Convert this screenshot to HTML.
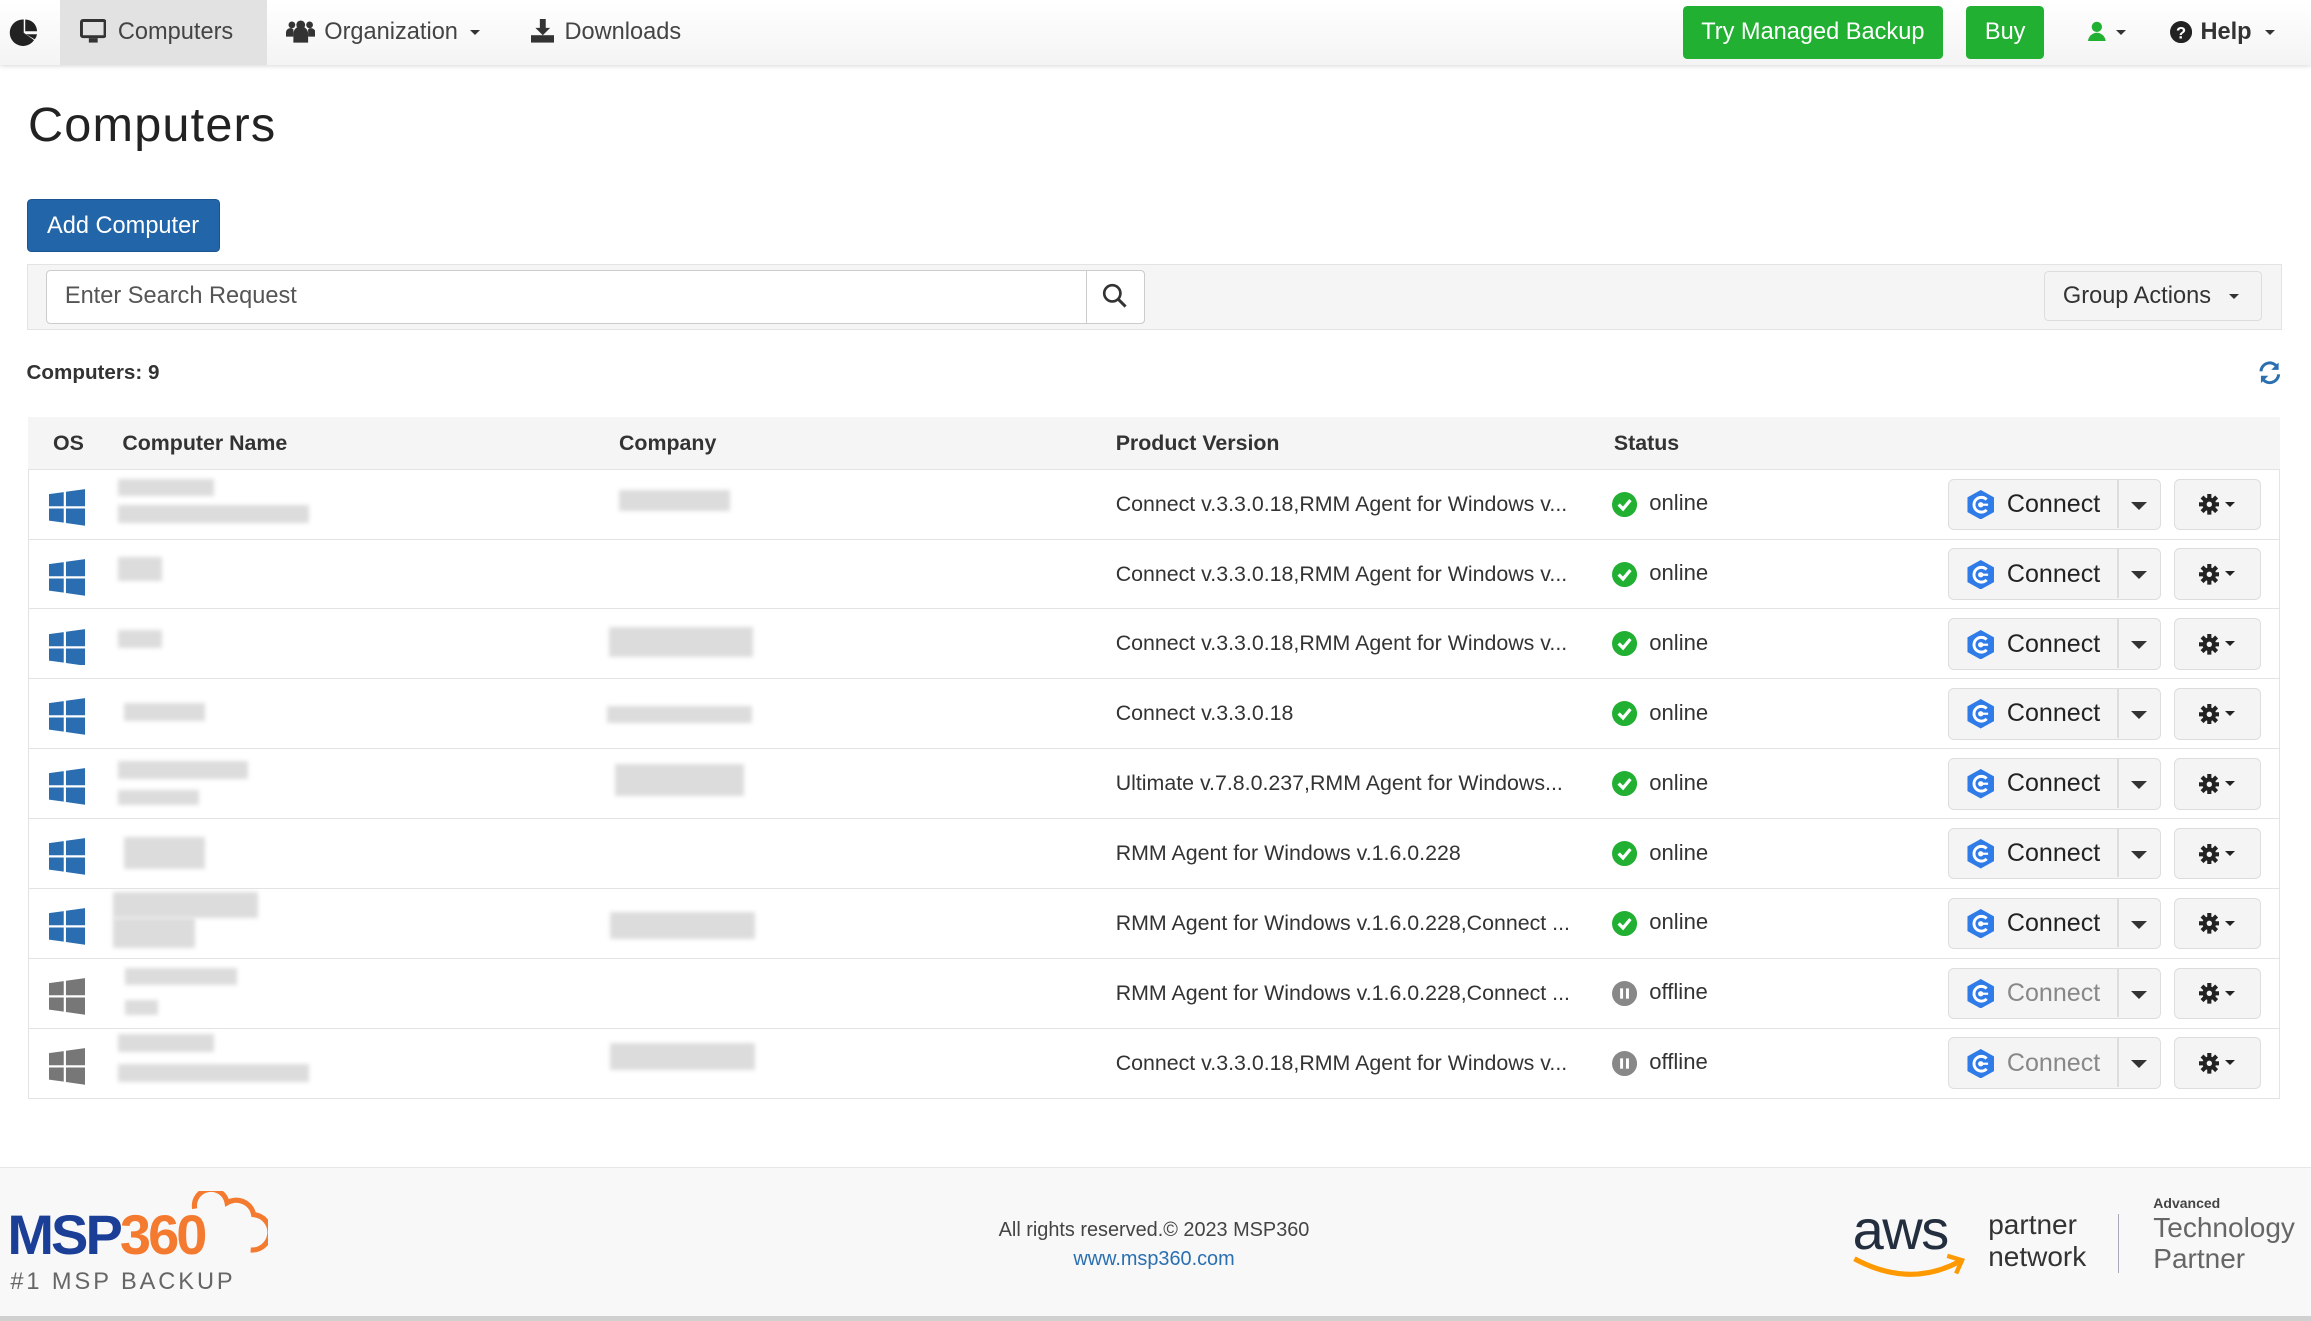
<!DOCTYPE html>
<html><head><meta charset="utf-8"><style>
html{zoom:1.47385}
*{box-sizing:border-box}
body{margin:0;width:1568px;height:896px;overflow:hidden;font-family:"Liberation Sans",sans-serif;color:#333;background:#fff;position:relative;font-size:14px}
.abs{position:absolute}
.nav{left:0;top:0;width:1568px;height:44px;background:linear-gradient(#fff,#f4f4f4);box-shadow:0 1px 3px rgba(0,0,0,.15)}
.nav .it{position:absolute;top:0;height:44px;line-height:43px;font-size:16px;color:#444}
.btn-g{background:#22b033;color:#fff;border-radius:3px;font-size:16px;text-align:center;line-height:35px;height:36px;top:4px}
.blur{background:#d6d6d6;filter:blur(1.5px);opacity:.85}
.row{left:19px;width:1528px;height:48px;border-top:1px solid #e3e3e3}
.cell{position:absolute;top:0;line-height:47px;font-size:14.5px;color:#333}
.cb{position:absolute;left:1303px;top:6px;width:144px;height:35px;border:1px solid #ddd;border-radius:4px;background:#f4f4f4}
.gb{position:absolute;left:1456px;top:6px;width:59px;height:35px;border:1px solid #ddd;border-radius:4px;background:#f4f4f4}
.car{display:inline-block;width:0;height:0;border-left:4px solid transparent;border-right:4px solid transparent;border-top:4px solid #333;vertical-align:middle}
</style></head><body>
<div class="abs nav">
 <svg class="abs" style="left:6px;top:12px" width="20" height="20" viewBox="0 0 20 20"><path d="M9 1A9 9 0 1 0 17 15L10 10V1Z" fill="#222"/><path d="M11 1A8 8 0 0 1 19 9H11Z" fill="#222"/><path d="M11.5 11H19A8 8 0 0 1 17.5 14.5Z" fill="#222"/></svg>
 <div class="it" style="left:41px;width:140px;background:#e2e2e2"></div>
 <svg class="abs" style="left:54px;top:13px" width="18" height="17" viewBox="0 0 18 17"><rect x="1" y="1" width="16" height="11" rx="1" fill="none" stroke="#333" stroke-width="2"/><rect x="6" y="13" width="6" height="3" fill="#333"/></svg>
 <div class="it" style="left:80px">Computers</div>
 <svg class="abs" style="left:194px;top:13px" width="20" height="16" viewBox="0 0 20 16"><circle cx="10" cy="4" r="3" fill="#333"/><circle cx="4" cy="4" r="2.3" fill="#333"/><circle cx="16" cy="4" r="2.3" fill="#333"/><path d="M5 16V10a5 5 0 0 1 10 0v6Z" fill="#333"/><path d="M0 12V9a3 3 0 0 1 5-2v5Z" fill="#333"/><path d="M20 12V9a3 3 0 0 0-5-2v5Z" fill="#333"/></svg>
 <div class="it" style="left:220px">Organization <span class="car" style="margin-left:4px"></span></div>
 <svg class="abs" style="left:360px;top:13px" width="16" height="16" viewBox="0 0 16 16"><path d="M6 0h4v6h3l-5 5-5-5h3z" fill="#333"/><rect x="0" y="11" width="16" height="5" fill="#333"/></svg>
 <div class="it" style="left:383px">Downloads</div>
 <div class="abs btn-g" style="left:1142px;width:176px">Try Managed Backup</div>
 <div class="abs btn-g" style="left:1334px;width:53px">Buy</div>
 <svg class="abs" style="left:1417px;top:14px" width="12" height="14" viewBox="0 0 12 14"><circle cx="6" cy="4" r="3.5" fill="#22b033"/><path d="M0 14a6 6 0 0 1 12 0Z" fill="#22b033"/></svg>
 <div class="it" style="left:1436px"><span class="car"></span></div>
 <svg class="abs" style="left:1472px;top:14px" width="15" height="15" viewBox="0 0 16 16"><circle cx="8" cy="8" r="8" fill="#222"/><text x="8" y="12.5" font-size="12" font-weight="bold" fill="#fff" text-anchor="middle" font-family="Liberation Sans">?</text></svg>
 <div class="it" style="left:1493px;font-weight:bold;color:#333">Help <span class="car" style="margin-left:5px"></span></div>
</div>
<div class="abs" style="left:19px;top:66px;font-size:33px;color:#222;letter-spacing:0.8px">Computers</div>
<div class="abs" style="left:18px;top:135px;width:131px;height:36px;background:#2265a9;border:1px solid #1b5590;border-radius:3px;color:#fff;font-size:16px;line-height:34px;text-align:center">Add Computer</div>
<div class="abs" style="left:18px;top:179px;width:1530px;height:45px;background:#f5f5f5;border:1px solid #e3e3e3"></div>
<div class="abs" style="left:31px;top:183px;width:746px;height:37px;background:#fff;border:1px solid #ccc;border-radius:3px"></div>
<div class="abs" style="left:737px;top:183px;width:40px;height:37px;border:1px solid #ccc;border-radius:0 3px 3px 0;background:#fff"></div>
<div class="abs" style="left:44px;top:191px;font-size:16px;color:#555">Enter Search Request</div>
<svg class="abs" style="left:748px;top:192px" width="18" height="18" viewBox="0 0 18 18"><circle cx="7" cy="7" r="5.5" fill="none" stroke="#333" stroke-width="1.8"/><path d="M11 11l5 5" stroke="#333" stroke-width="2"/></svg>
<div class="abs" style="left:1387px;top:184px;width:148px;height:34px;border:1px solid #ddd;border-radius:3px;background:#f4f4f4;font-size:16px;line-height:32px;padding-left:12px;color:#333">Group Actions <span class="car" style="margin-left:8px"></span></div>
<div class="abs" style="left:18px;top:245px;font-size:14px;font-weight:bold;color:#333">Computers: 9</div>
<svg class="abs" style="left:1532px;top:245px" width="16" height="16" viewBox="0 0 16 16"><path d="M2 7A6 6 0 0 1 13 4" fill="none" stroke="#2a6fb0" stroke-width="2"/><path d="M14 1v5h-5z" fill="#2a6fb0"/><path d="M14 9A6 6 0 0 1 3 12" fill="none" stroke="#2a6fb0" stroke-width="2"/><path d="M2 15v-5h5z" fill="#2a6fb0"/></svg>
<div class="abs" style="left:19px;top:283px;width:1528px;height:463px;border:1px solid #e3e3e3"></div>
<div class="abs" style="left:19px;top:283px;width:1528px;height:35px;background:#f5f5f5;font-weight:bold;font-size:14.5px;line-height:36px">
 <span class="abs" style="left:17px">OS</span><span class="abs" style="left:64px">Computer Name</span><span class="abs" style="left:401px">Company</span><span class="abs" style="left:738px">Product Version</span><span class="abs" style="left:1076px">Status</span>
</div>
<div id="rows"></div>
<div class="abs" style="left:0;top:792px;width:1568px;height:101px;background:#f8f8f8;border-top:1px solid #e6e6e6"></div>
<div class="abs" style="left:0;top:893px;width:1568px;height:3px;background:#d0d0d0"></div>
<div class="abs" style="left:5px;top:818px;font-size:38px;font-weight:bold;letter-spacing:-2px;line-height:40px"><span style="color:#1b3f97">MSP</span><span style="color:#f47a30">360</span></div>
<svg class="abs" style="left:120px;top:808px" width="62" height="50" viewBox="0 0 62 50"><path d="M12 12a10 10 0 0 1 22-4a12 12 0 0 1 18 8a12 12 0 0 1 -2 24" fill="none" stroke="#f47a30" stroke-width="3.5"/></svg>
<div class="abs" style="left:7px;top:860px;font-size:16px;letter-spacing:2px;color:#666">#1 MSP BACKUP</div>
<div class="abs" style="left:600px;top:825px;width:366px;text-align:center;font-size:13.5px;color:#444;line-height:20px">All rights reserved.© 2023 MSP360<br><span style="color:#2a6fb0">www.msp360.com</span></div>
<div class="abs" style="left:1257px;top:812px;font-size:38px;color:#232f3e;letter-spacing:-1px">aws</div>
<svg class="abs" style="left:1255px;top:846px" width="80" height="24" viewBox="0 0 80 24"><path d="M3 8Q40 28 74 10" fill="none" stroke="#f90" stroke-width="3.5"/><path d="M66 6l10 3-4 9" fill="none" stroke="#f90" stroke-width="3"/></svg>
<div class="abs" style="left:1349px;top:820px;font-size:19px;color:#333;line-height:22px">partner<br>network</div>
<div class="abs" style="left:1437px;top:824px;width:1px;height:40px;background:#aab"></div>
<div class="abs" style="left:1461px;top:811px;font-size:9.5px;font-weight:bold;color:#444">Advanced</div>
<div class="abs" style="left:1461px;top:823px;font-size:19px;color:#666;line-height:21px">Technology<br>Partner</div>
<script>
var d=[["Connect v.3.3.0.18,RMM Agent for Windows v...",1,[[0,6,65,12],[0,24,130,12]],[[2,14,75,14]]],
["Connect v.3.3.0.18,RMM Agent for Windows v...",1,[[0,12,30,16]],[]],
["Connect v.3.3.0.18,RMM Agent for Windows v...",1,[[0,14,30,12]],[[-5,12,98,20]]],
["Connect v.3.3.0.18",1,[[4,16,55,12]],[[-6,18,98,12]]],
["Ultimate v.7.8.0.237,RMM Agent for Windows...",1,[[0,8,88,12],[0,28,55,10]],[[-1,10,88,22]]],
["RMM Agent for Windows v.1.6.0.228",1,[[4,12,55,22]],[]],
["RMM Agent for Windows v.1.6.0.228,Connect ...",1,[[-3,2,98,18],[-3,20,55,20]],[[-4,16,98,18]]],
["RMM Agent for Windows v.1.6.0.228,Connect ...",0,[[5,6,76,12],[5,28,22,10]],[]],
["Connect v.3.3.0.18,RMM Agent for Windows v...",0,[[0,4,65,12],[0,24,130,12]],[[-4,10,98,18]]]];
var h="";
d.forEach(function(r,i){var t=318+i*47.4;var on=r[1];var wc=on?"#2a6db0":"#777";
h+='<div class="abs row" style="top:'+t+'px">';
h+='<svg class="abs" style="left:14px;top:13px" width="25" height="25" viewBox="0 0 25 25"><path d="M0 3.5l10-1.4v9.6H0zM11.5 1.9L25 0v11.7H11.5zM0 13.2h10v9.6L0 21.5zM11.5 13.2H25V25l-13.5-1.9z" fill="'+wc+'"/></svg>';
r[2].forEach(function(b){h+='<div class="abs blur" style="left:'+(61+b[0])+'px;top:'+b[1]+'px;width:'+b[2]+'px;height:'+b[3]+'px"></div>'});
r[3].forEach(function(b){h+='<div class="abs blur" style="left:'+(399+b[0])+'px;top:'+b[1]+'px;width:'+b[2]+'px;height:'+b[3]+'px"></div>'});
h+='<div class="cell" style="left:738px">'+r[0]+'</div>';
h+=on?'<svg class="abs" style="left:1075px;top:15px" width="17" height="17" viewBox="0 0 17 17"><circle cx="8.5" cy="8.5" r="8.5" fill="#22b033"/><path d="M4.5 8.5l3 3 5-6" fill="none" stroke="#fff" stroke-width="2.2"/></svg>':'<svg class="abs" style="left:1075px;top:15px" width="17" height="17" viewBox="0 0 17 17"><circle cx="8.5" cy="8.5" r="8.5" fill="#888"/><rect x="5.5" y="5" width="2" height="7" fill="#fff"/><rect x="9.5" y="5" width="2" height="7" fill="#fff"/></svg>';
h+='<div class="cell" style="left:1100px;top:-1px;font-size:15px">'+(on?'online':'offline')+'</div>';
h+='<div class="cb"><svg class="abs" style="left:11px;top:7px" width="20" height="20" viewBox="0 0 20 20"><path d="M10 0l9 5v10l-9 5-9-5V5z" fill="#2f7be8"/><path d="M14 6.5A5 5 0 1 0 14 13.5" fill="none" stroke="#fff" stroke-width="2"/><circle cx="10" cy="10" r="1.8" fill="#fff"/><path d="M10 10h5" stroke="#fff" stroke-width="1.5"/></svg><span class="abs" style="left:39px;top:7px;font-size:17px;color:'+(on?'#222':'#888')+'">Connect</span><div class="abs" style="left:114px;top:0;width:1px;height:33px;background:#ddd"></div><span class="abs" style="left:123px;top:15px;width:0;height:0;border-left:6px solid transparent;border-right:6px solid transparent;border-top:6px solid #333"></span></div>';
h+='<div class="gb"><svg class="abs" style="left:16px;top:10px" width="14" height="14" viewBox="0 0 14 14"><g fill="#222"><circle cx="7" cy="7" r="4.6"/><rect x="5.6" y="0" width="2.8" height="14"/><rect x="0" y="5.6" width="14" height="2.8"/><rect x="5.6" y="0" width="2.8" height="14" transform="rotate(45 7 7)"/><rect x="5.6" y="0" width="2.8" height="14" transform="rotate(-45 7 7)"/></g><circle cx="7" cy="7" r="1.8" fill="#f4f4f4"/></svg><span class="abs" style="left:34px;top:15px;width:0;height:0;border-left:4px solid transparent;border-right:4px solid transparent;border-top:4px solid #222"></span></div>';
h+='</div>';});
document.getElementById("rows").innerHTML=h;
</script>
</body></html>
